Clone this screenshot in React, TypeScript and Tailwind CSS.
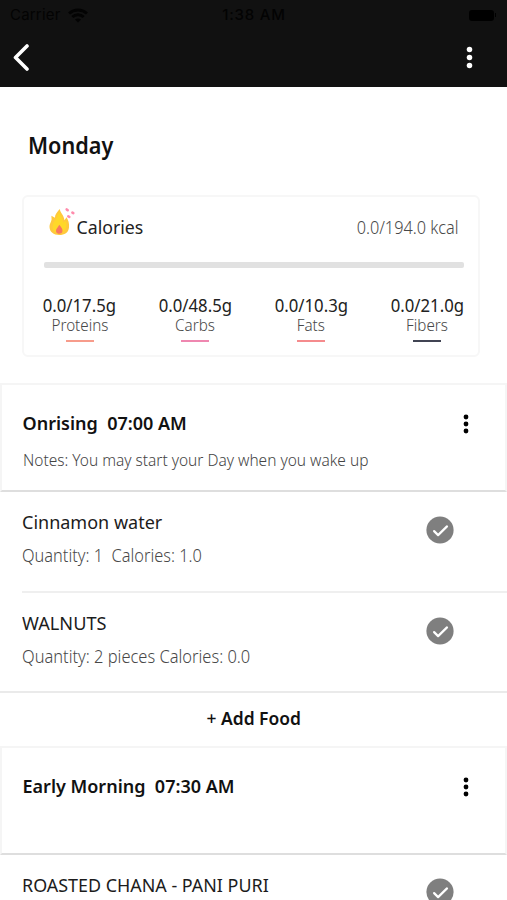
import React from "react";

type Food = { name: string; detail: string; nameFit: string; detailFit: string; checkTop: string };

const Kebab = ({ className }: { className: string }) => (
  <svg className={className} viewBox="0 0 6 20" fill="currentColor">
    <circle cx="3" cy="3" r="2.4" />
    <circle cx="3" cy="10" r="2.4" />
    <circle cx="3" cy="17" r="2.4" />
  </svg>
);

const Check = () => (
  <svg className="h-7 w-7 shrink-0" viewBox="0 0 28 28" fill="none">
    <circle cx="14" cy="14" r="13.6" fill="#7f7f7f" />
    <path d="M8.1 15.1l4 4 8.9-8.7" stroke="#fff" strokeWidth="2.2" strokeLinecap="round" strokeLinejoin="round" />
  </svg>
);

const Flame = () => (
  <svg className="h-[30px] w-7" viewBox="0 0 28 30">
    <path d="M11.6 2C12.4 5.8 16.1 8.4 16.4 13.2L18.6 10.2C20.2 13 21.5 16 21 20.5C20.4 25.8 16.6 28 11.2 28C5.5 28 1.8 25.2 1.5 20.1C1.3 16.8 3.1 15.5 3.6 12.5L3.4 8.8L6.9 10.8C7 7 9.2 5.2 11.6 2Z" fill="#ffc93d" />
    <path d="M11.4 5C12 9 15 12 15.2 15.5L18 14C19.5 20 17 26 11.2 26C5 26 3.1 21 5.8 15C9 13 8.7 8 11.4 5Z" fill="#ffd829" />
    <path d="M11.3 17.7C13.2 20.2 15.3 22.1 14.3 25.1C13.2 27.4 9 27.2 8.2 25C7.3 22.2 9.8 20.7 11.3 17.7Z" fill="#f9785f" />
    <path d="M18.7 2.4l1 .8M24.4 5.6l.9.5M20.3 9.3l1 .5" stroke="#ff8bac" strokeWidth="2.6" strokeLinecap="round" />
  </svg>
);

const macros = [
  { value: "0.0/17.5g", label: "Proteins", line: "bg-[#f79c8b]" },
  { value: "0.0/48.5g", label: "Carbs", line: "bg-[#ef87b0]" },
  { value: "0.0/10.3g", label: "Fats", line: "bg-[#f58b8d]" },
  { value: "0.0/21.0g", label: "Fibers", line: "bg-[#414453]" },
];

const foods: Food[] = [
  { name: "Cinnamon water", detail: "Quantity: 1  Calories: 1.0", nameFit: "", detailFit: "scale-x-[0.935]", checkTop: "pt-6" },
  { name: "WALNUTS", detail: "Quantity: 2 pieces Calories: 0.0", nameFit: "scale-x-[1.01]", detailFit: "scale-x-[0.94]", checkTop: "pt-[23.5px]" },
  { name: "ROASTED CHANA - PANI PURI", detail: "", nameFit: "scale-x-[0.995]", detailFit: "", checkTop: "pt-[23px]" },
];

const FoodRow = ({ food }: { food: Food }) => (
  <div className="flex h-full justify-between pr-[53px]">
    <div className="flex flex-col items-start pt-[18px]">
      <span className={`origin-left whitespace-pre text-[18px] leading-6 text-[#1c1c1c] ${food.nameFit}`}>{food.name}</span>
      {food.detail && (
        <span className={`mt-2 origin-left whitespace-pre pt-[0.5px] text-[17.5px] font-light leading-6 text-[#484848] ${food.detailFit}`}>{food.detail}</span>
      )}
    </div>
    <div className={food.checkTop}><Check /></div>
  </div>
);

const MealHeader = ({ title, notes }: { title: string; notes?: string }) => (
  <section className="h-[109px] border-2 border-[#f5f5f5] border-b-[#dedede] pl-[20.5px] pr-[36px] pt-[24px]">
    <div className="flex items-center justify-between">
      <h2 className="origin-left whitespace-pre text-[18px] font-semibold leading-7 text-[#111]">{title}</h2>
      <Kebab className="mt-[2px] h-5 w-[6px] text-black" />
    </div>
    {notes && <p className="mt-[11px] w-max origin-left scale-x-[0.91] text-[17px] font-light leading-6 text-[#444]">{notes}</p>}
  </section>
);

export default function App() {
  return (
    <main className="h-[900px] w-[507px] overflow-hidden bg-white font-['Noto_Sans',sans-serif]">
      <header className="h-[87px] bg-[#111] font-['Inter',sans-serif]">
        <div className="grid h-[29px] grid-cols-3 items-center pl-[10px] pr-[11px] pt-px text-[15px] text-[#030303]">
          <div className="flex items-center gap-[7px]">
            <span className="tracking-[0.2px]">Carrier</span>
            <svg className="h-[15px] w-5" viewBox="0 0 20 15" fill="none" stroke="currentColor" strokeWidth="3">
              <path d="M1 5.5C6.2.7 13.8.7 19 5.5M4.3 9c3.3-3 8.1-3 11.4 0" />
              <path d="M7 11.5c2-1.5 4-1.5 6 0l-3 3z" fill="currentColor" stroke="none" />
            </svg>
          </div>
          <span className="pl-[2px] text-center font-medium tracking-[0.8px]">1:38 AM</span>
          <span className="flex items-center justify-end gap-[1px]"><i className="h-[11px] w-[25px] rounded-[3px] bg-black" /><i className="h-1 w-[1px] bg-black" /></span>
        </div>
        <div className="flex h-14 items-center justify-between pl-3 pr-[34.5px] text-white">
          <svg className="h-7 w-[18px]" viewBox="0 0 18 28" fill="none" stroke="currentColor" strokeWidth="3.6" strokeLinecap="round" strokeLinejoin="round"><path d="M15 3L3.5 14.5 15 26" /></svg>
          <Kebab className="h-[23px] w-[7px]" />
        </div>
      </header>
      <div className="h-[108px] pl-7 pt-[42px]">
        <h1 className="w-max origin-left scale-x-[0.94] text-[23px] font-semibold leading-8 text-[#111]">Monday</h1>
      </div>
      <section className="ml-[22px] h-[162px] w-[458px] rounded-[6px] border-2 border-[#f7f7f7] px-5">
        <div className="flex h-[59px]">
          <div className="pl-[4px] pt-[10px]"><Flame /></div>
          <span className="origin-left scale-x-[0.985] pl-[0.5px] pt-[18px] text-[18px] leading-6 text-[#222]">Calories</span>
          <span className="ml-auto mr-[-1px] origin-right scale-x-[0.93] pt-[18px] text-[17.5px] font-light leading-6 text-[#484848]">0.0/194.0 kcal</span>
        </div>
        <div className="mt-[6px] h-[6px] w-[420px] rounded-[2px] bg-[#e1e1e1]" />
        <div className="-ml-[2.5px] -mr-[7px] mt-[27px] flex justify-between">
          {macros.map((m) => (
            <div key={m.label} className="flex w-[76px] flex-col items-center whitespace-nowrap">
              <span className="scale-x-[0.955] text-[17.5px] leading-5 text-[#222]">{m.value}</span>
              <span className="scale-x-[0.95] text-[16px] font-light leading-5 text-[#484848]">{m.label}</span>
              <i className={`mt-[5px] h-[2px] w-7 ${m.line}`} />
            </div>
          ))}
        </div>
      </section>
      <div className="mt-[26px]">
        <MealHeader title="Onrising  07:00 AM" notes="Notes: You may start your Day when you wake up" />
      </div>
      <div className="ml-[22px] h-[101px] border-b-2 border-[#efefef]"><FoodRow food={foods[0]} /></div>
      <div className="h-[100px] border-b-2 border-[#eaeaea] pl-[22px]"><FoodRow food={foods[1]} /></div>
      <button className="flex h-[53px] w-full items-center justify-center pb-[4px] text-[18px] leading-6 text-[#111]">
        <span className="scale-x-[0.97] whitespace-pre font-semibold"><span className="font-medium">+</span> Add Food</span>
      </button>
      <MealHeader title="Early Morning  07:30 AM" />
      <div className="h-[100px] pl-[22px]"><FoodRow food={foods[2]} /></div>
    </main>
  );
}
